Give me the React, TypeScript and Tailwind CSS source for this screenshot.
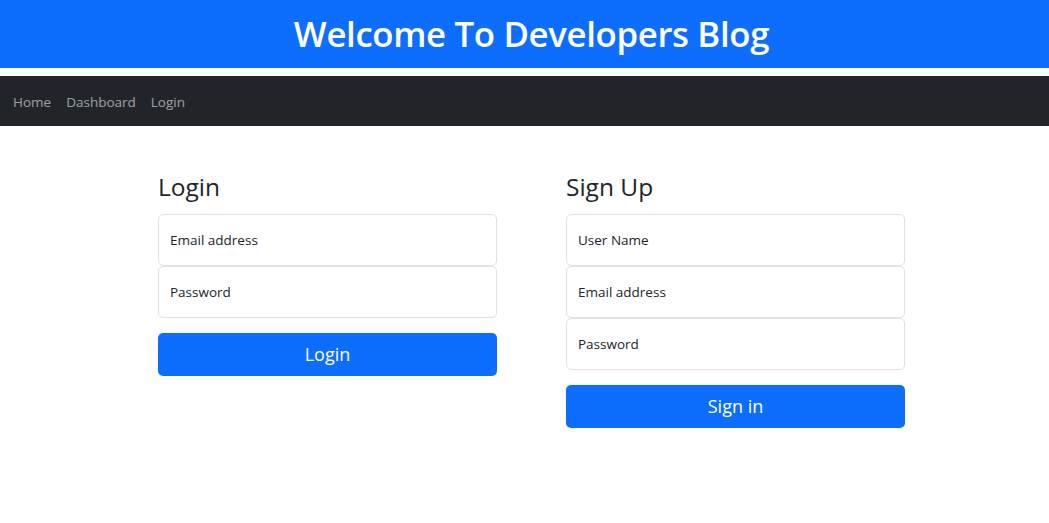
import React from "react";

const font = { fontFamily: '"Open Sans", "Noto Sans", sans-serif' };

function Field({ label }: { label: string }) {
  return (
    <div className="h-[52px] border border-[#dee2e6] rounded-[5px] bg-white flex items-center px-[11px] pt-[1px] text-[13.5px] text-[#212529]">
      {label}
    </div>
  );
}

function Btn({ label }: { label: string }) {
  return (
    <button className="mt-[15px] h-[43px] w-full bg-[#0d6efd] rounded-[5px] text-white text-[18px] flex items-center justify-center">
      {label}
    </button>
  );
}

export default function App() {
  return (
    <div className="w-[1049px] h-[523px] bg-white overflow-hidden" style={font}>
      <header className="h-[68px] bg-[#0d6efd] flex items-center justify-center pl-[14px]">
        <h1 className="text-white text-[34.8px] font-semibold tracking-[-0.35px] leading-none">
          Welcome To Developers Blog
        </h1>
      </header>
      <nav className="mt-[8px] h-[50px] bg-[#212529] flex items-center pl-[13px] pt-[2px] gap-[15px] text-[13.5px] text-white/55">
        <span>Home</span>
        <span>Dashboard</span>
        <span>Login</span>
      </nav>
      <main className="flex gap-[69px] pl-[158px] pt-[46px]">
        <section className="w-[339px] flex flex-col">
          <h2 className="text-[24.5px] leading-[29px] text-[#212529] mb-[13px]">Login</h2>
          <Field label="Email address" />
          <Field label="Password" />
          <Btn label="Login" />
        </section>
        <section className="w-[339px] flex flex-col">
          <h2 className="text-[24.5px] leading-[29px] text-[#212529] mb-[13px]">Sign Up</h2>
          <Field label="User Name" />
          <Field label="Email address" />
          <Field label="Password" />
          <Btn label="Sign in" />
        </section>
      </main>
    </div>
  );
}
